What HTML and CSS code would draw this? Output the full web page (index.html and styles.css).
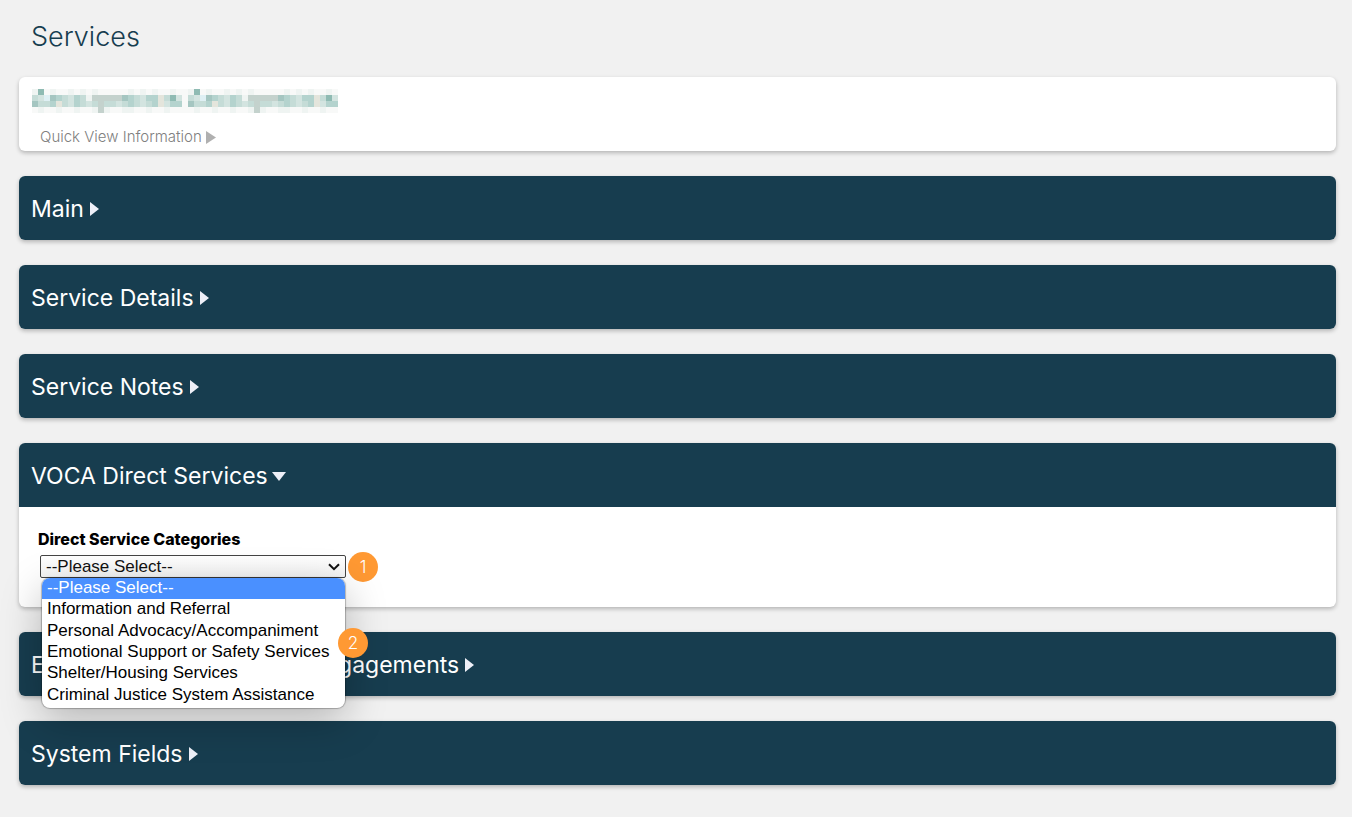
FILE: index.html
```html
<!DOCTYPE html>
<html lang="en">
<head>
<meta charset="utf-8">
<meta name="viewport" content="width=device-width, initial-scale=1">
<title>Services</title>
<link rel="stylesheet" href="styles.css">
</head>
<body>
<h1 class="page-title">Services</h1>
<main class="sections">
  <section class="card client">
    <svg class="redacted" role="img" aria-label="Name hidden" width="306" height="24" viewBox="0 0 51 4" shape-rendering="crispEdges"></svg>
    <button class="quick-view" type="button">Quick View Information
      <svg class="quick-arrow" width="10" height="13" viewBox="0 0 10 13"><path d="M0 0L10 6.5L0 13Z"/></svg>
    </button>
  </section>

  <section class="card">
    <h2 class="bar"><button class="toggle" type="button" aria-expanded="false">Main <svg class="arrow" width="9" height="14" viewBox="0 0 9 14"><path d="M0 0L9 7L0 14Z"/></svg></button></h2>
  </section>
  <section class="card">
    <h2 class="bar"><button class="toggle" type="button" aria-expanded="false">Service Details <svg class="arrow" width="9" height="14" viewBox="0 0 9 14"><path d="M0 0L9 7L0 14Z"/></svg></button></h2>
  </section>
  <section class="card">
    <h2 class="bar"><button class="toggle" type="button" aria-expanded="false">Service Notes <svg class="arrow" width="9" height="14" viewBox="0 0 9 14"><path d="M0 0L9 7L0 14Z"/></svg></button></h2>
  </section>

  <section class="card open">
    <h2 class="bar"><button class="toggle" type="button" aria-expanded="true">VOCA Direct Services <svg class="arrow" width="14" height="9" viewBox="0 0 14 9"><path d="M0 0H14L7 9Z"/></svg></button></h2>
    <div class="panel">
      <label class="field-label" for="category">Direct Service Categories</label>
      <div class="field">
        <div class="select-wrap">
          <select class="select" id="category"><option>--Please Select--</option></select>
          <svg class="chevron" width="12" height="8" viewBox="0 0 12 8"><path d="M1 1.2L6 6.2L11 1.2"/></svg>
          <ul class="menu" role="listbox" aria-label="Direct Service Categories">
            <li class="option selected" role="option" aria-selected="true">--Please Select--</li>
            <li class="option" role="option">Information and Referral</li>
            <li class="option" role="option">Personal Advocacy/Accompaniment</li>
            <li class="option" role="option">Emotional Support or Safety Services</li>
            <li class="option" role="option">Shelter/Housing Services</li>
            <li class="option" role="option">Criminal Justice System Assistance</li>
          </ul>
          <span class="marker marker-menu">2</span>
        </div>
        <span class="marker">1</span>
      </div>
    </div>
  </section>

  <section class="card">
    <h2 class="bar"><button class="toggle" type="button" aria-expanded="false">Extended Service &amp; Civic Engagements <svg class="arrow" width="9" height="14" viewBox="0 0 9 14"><path d="M0 0L9 7L0 14Z"/></svg></button></h2>
  </section>
  <section class="card">
    <h2 class="bar"><button class="toggle" type="button" aria-expanded="false">System Fields <svg class="arrow" width="9" height="14" viewBox="0 0 9 14"><path d="M0 0L9 7L0 14Z"/></svg></button></h2>
  </section>
</main>
<script src="mosaic.js"></script>
</body>
</html>
```
FILE: styles.css
```css
* { box-sizing: border-box; }

body {
  margin: 0;
  padding: 20px 16px 32px 19px;
  background: #f1f1f1;
  color: #173d4f;
  font-family: Inter, "Liberation Sans", sans-serif;
}

.page-title {
  margin: 0 0 23px;
  padding-left: 12px;
  font-size: 27px;
  line-height: 34px;
  font-weight: 300;
}

.sections {
  display: flex;
  flex-direction: column;
  gap: 25px;
}

.card {
  border-radius: 6px;
  background: #fff;
  box-shadow: 0 2px 4px rgba(0, 0, 0, 0.25);
}

.client {
  display: flex;
  flex-direction: column;
  align-items: flex-start;
  gap: 13px;
  padding: 12px 13px 3px;
}

.redacted { display: block; }

.quick-view {
  display: flex;
  align-items: center;
  gap: 4px;
  margin: 0;
  padding: 0 8px;
  border: 0;
  background: none;
  color: #808080;
  font-family: inherit;
  font-size: 15px;
  line-height: 22px;
  font-weight: 300;
}

.quick-arrow { fill: #b0b0b0; }

.bar {
  margin: 0;
  border-radius: 6px;
  background: #173d4f;
  font-size: 23px;
  line-height: 32px;
  font-weight: 400;
}

.open .bar { border-radius: 6px 6px 0 0; }

.toggle {
  display: flex;
  align-items: center;
  gap: 6px;
  width: 100%;
  margin: 0;
  padding: 17px 12px 15px;
  border: 0;
  background: none;
  color: #fff;
  font: inherit;
  text-align: left;
}

.open .toggle { gap: 4px; }

.arrow { fill: #eef0f8; }

.panel { padding: 22px 18px 29px 19px; }

.field-label {
  display: block;
  color: #000;
  font-size: 16px;
  line-height: 20px;
  font-weight: 800;
}

.field {
  display: flex;
  align-items: center;
  gap: 2px;
  padding: 6px 0 0 2px;
}

.select-wrap {
  position: relative;
  width: 306px;
}

.select {
  display: block;
  width: 100%;
  height: 23px;
  padding: 0 5px;
  border: 1px solid #444;
  border-radius: 2px;
  appearance: none;
  background: linear-gradient(#fff, #f4f4f4);
  color: #111;
  font-family: "Liberation Sans", Arial, sans-serif;
  font-size: 17px;
}

.chevron {
  position: absolute;
  top: 8px;
  right: 6px;
  fill: none;
  stroke: #111;
  stroke-width: 2;
}

.menu {
  position: absolute;
  z-index: 2;
  top: 23px;
  left: 2px;
  display: grid;
  grid-auto-rows: 1fr;
  width: 303px;
  height: 130px;
  margin: 0;
  padding: 0 0 2px;
  overflow: hidden;
  list-style: none;
  border-radius: 8px;
  background: #fff;
  box-shadow: 0 0 1px 1px rgba(0, 0, 0, 0.25), 0 12px 40px rgba(0, 0, 0, 0.25);
  color: #000;
  font-family: "Liberation Sans", Arial, sans-serif;
  font-size: 17px;
}

.option {
  padding: 0 5px;
  line-height: 20px;
}

.selected {
  background: #4a90ff;
  color: #fff;
}

.marker {
  display: flex;
  align-items: center;
  justify-content: center;
  width: 30px;
  height: 30px;
  margin: -4px 0;
  border-radius: 50%;
  background: #ff9933;
  color: #fff;
  font-size: 17px;
  line-height: 20px;
  font-weight: 300;
}

.marker-menu {
  position: absolute;
  z-index: 3;
  top: 77px;
  left: 298px;
}
```
FILE: mosaic.js
```js
// One letter per mosaic tile; each letter is a key of the palette.
const palette = {
  a: "#f8f9f8", b: "#eff4f2", c: "#d3e4e0", d: "#c5dcd7",
  e: "#b4d3ce", f: "#8fbbb3", g: "#a5c6c1", s: "#c4d2cd", n: "#e4e5dc", h: "#dff0f4"
};
const rows = [
  "bfabaabababaaaaabababaaba",
  "dchgedcedbsssssgedceendfc",
  "gddendcedcdsddcdedcdencee",
  "abaabaabaabsbaabbaabaabaa"
];
const svg = document.querySelector(".redacted");
rows.forEach((word, y) => {
  [...(word + "a" + word)].forEach((key, x) => {
    const tile = document.createElementNS("http://www.w3.org/2000/svg", "rect");
    tile.setAttribute("x", x);
    tile.setAttribute("y", y);
    tile.setAttribute("width", 1);
    tile.setAttribute("height", 1);
    tile.setAttribute("fill", palette[key]);
    svg.append(tile);
  });
});
```
